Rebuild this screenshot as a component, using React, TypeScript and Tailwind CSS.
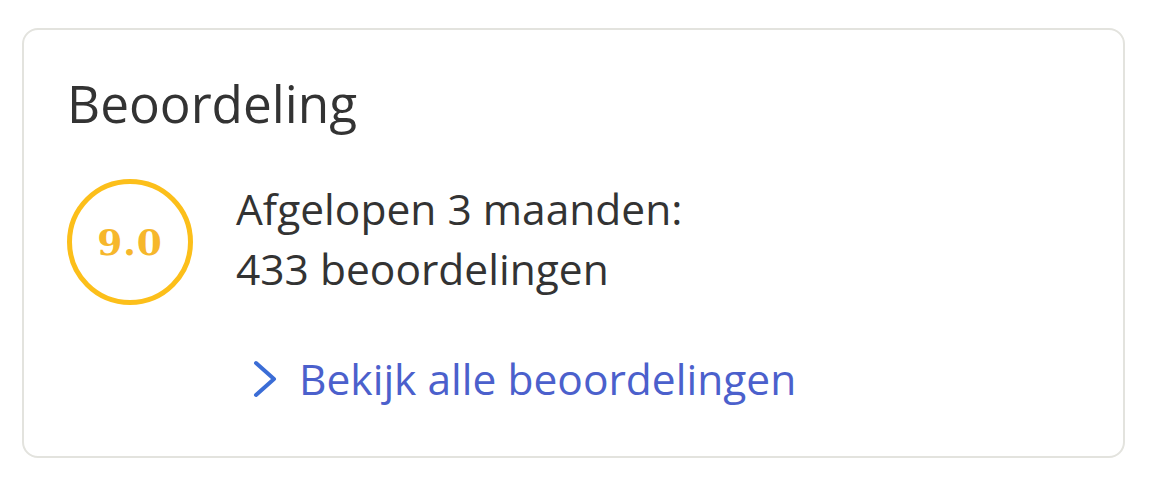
import React from "react";

export default function App() {
  return (
    <div className="w-[1152px] h-[483px] bg-white pt-[28px] pl-[22px]" style={{ fontFamily: '"Open Sans", sans-serif' }}>
      <div className="w-[1103px] h-[430px] border-2 border-[#e3e3de] rounded-[16px] pl-[43px] pt-[41px]">
        <h2 className="text-[51.3px] leading-[64px] text-[#333333] font-normal">Beoordeling</h2>
        <div className="flex mt-[44px]">
          <div className="w-[126px] h-[126px] rounded-full border-[5px] border-[#fcbf1a] flex items-center justify-center shrink-0">
            <span className="text-[36px] font-bold tracking-[1px] text-[#f6b72c]" style={{ fontFamily: '"DejaVu Serif", serif' }}>9.0</span>
          </div>
          <div className="ml-[43px] text-[42.5px] leading-[60px] text-[#333333]">
            <div>Afgelopen 3 maanden:</div>
            <div>433 beoordelingen</div>
            <a className="flex items-center mt-[50px] ml-[16px] text-[#4b60cc]">
              <svg width="28" height="40" viewBox="0 0 28 40" className="mr-[19px]" fill="none">
                <path d="M4 4 L22 20 L4 36" stroke="#3b6dd6" strokeWidth="4" strokeLinecap="round" strokeLinejoin="round" />
              </svg>
              <span>Bekijk alle beoordelingen</span>
            </a>
          </div>
        </div>
      </div>
    </div>
  );
}
